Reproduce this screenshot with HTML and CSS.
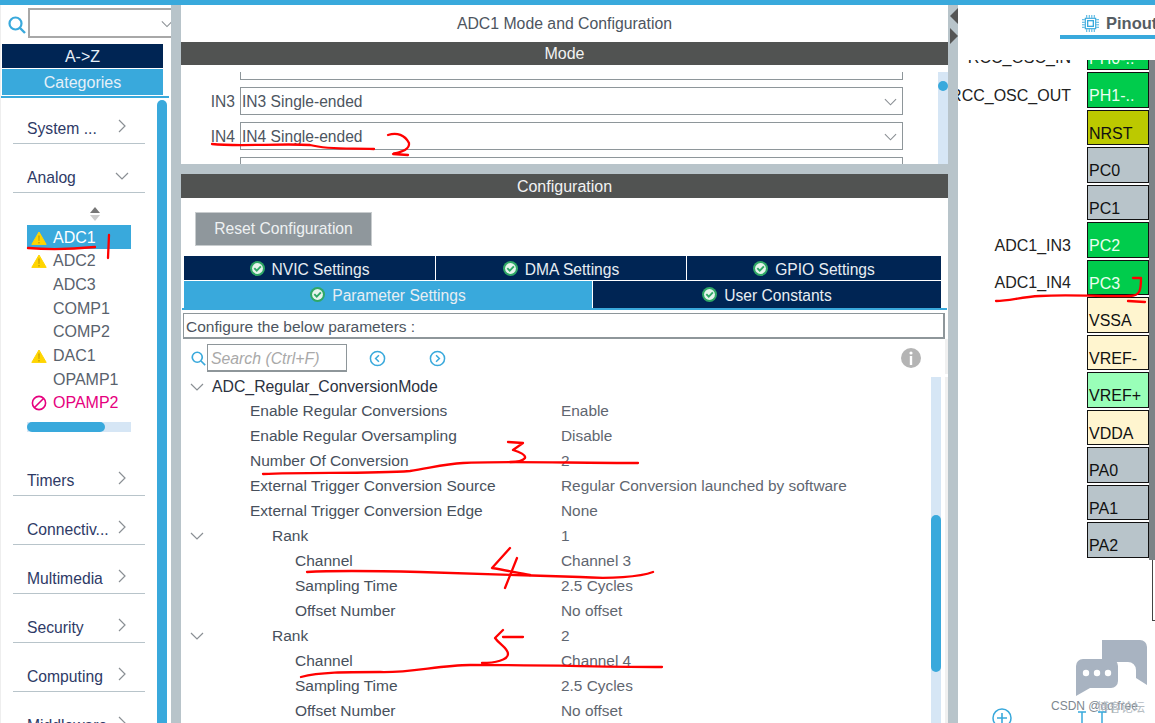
FILE: index.html
```html
<!DOCTYPE html>
<html lang="en">
<head>
<meta charset="utf-8">
<title>ADC1 Mode and Configuration</title>
<link rel="stylesheet" href="styles.css">
</head>
<body>
<svg width="0" height="0" class="defs">
  <symbol id="warn" viewBox="0 0 16 14"><path d="M8 1 15.2 13.4H0.8Z" fill="#ffd500" stroke="#ffd500" stroke-linejoin="round"/><path d="M7.4 4.5h1.2l-.2 5.5h-.8ZM7.4 11h1.2v1.4H7.4Z" fill="#b8960a"/></symbol>
  <symbol id="ok" viewBox="0 0 16 16"><circle cx="8" cy="8" r="8" fill="#2fa866"/><circle cx="8" cy="8" r="5.8" fill="#e6f4ec"/><path d="M4.6 7.6 7.2 10.4 11.6 5.8" fill="none" stroke="#2fa866" stroke-width="2"/></symbol>
  <symbol id="right" viewBox="0 0 8 14"><path d="M1 1l6 6-6 6" fill="none" stroke="#8a8f94" stroke-width="1.2"/></symbol>
  <symbol id="down" viewBox="0 0 14 8"><path d="M1 1l6 6 6-6" fill="none" stroke="#8a8f94" stroke-width="1.2"/></symbol>
</svg>
<div class="topbar"></div>
<div class="main">
  <aside class="left">
    <div class="search-row">
      <svg class="lens" viewBox="0 0 18 18"><circle cx="7.5" cy="7.5" r="6" fill="none" stroke="#39a9dc" stroke-width="2.2"/><path d="M12 12l5 5" stroke="#39a9dc" stroke-width="2.4"/></svg>
      <div class="combo"><svg class="combo-chev"><use href="#down"/></svg></div>
    </div>
    <div class="sort sort-az">A-&gt;Z</div>
    <div class="sort sort-cat">Categories</div>
    <div class="left-rule"></div>
    <div class="nav">
      <div class="nav-col">
        <div class="cat cat-first"><span>System ...</span><svg class="chev-r"><use href="#right"/></svg></div>
        <div class="cat"><span>Analog</span><svg class="chev-d"><use href="#down"/></svg></div>
        <div class="periph">
          <svg class="sorter" viewBox="0 0 12 14"><path d="M6 0l5 6H1Z" fill="#777"/><path d="M6 14l5-6H1Z" fill="#ccc"/></svg>
          <div class="item item-on"><svg class="ico"><use href="#warn"/></svg>ADC1</div>
          <div class="item"><svg class="ico"><use href="#warn"/></svg>ADC2</div>
          <div class="item"><span class="ico"></span>ADC3</div>
          <div class="item"><span class="ico"></span>COMP1</div>
          <div class="item"><span class="ico"></span>COMP2</div>
          <div class="item"><svg class="ico"><use href="#warn"/></svg>DAC1</div>
          <div class="item"><span class="ico"></span>OPAMP1</div>
          <div class="item item-no"><svg class="ico" viewBox="0 0 16 16"><circle cx="8" cy="8" r="6.6" fill="none" stroke="#e6007e" stroke-width="1.6"/><path d="M3.5 12.5l9-9" stroke="#e6007e" stroke-width="1.6"/></svg>OPAMP2</div>
          <div class="hbar"><div class="hthumb"></div></div>
        </div>
        <div class="cat"><span>Timers</span><svg class="chev-r"><use href="#right"/></svg></div>
        <div class="cat"><span>Connectiv...</span><svg class="chev-r"><use href="#right"/></svg></div>
        <div class="cat"><span>Multimedia</span><svg class="chev-r"><use href="#right"/></svg></div>
        <div class="cat"><span>Security</span><svg class="chev-r"><use href="#right"/></svg></div>
        <div class="cat"><span>Computing</span><svg class="chev-r"><use href="#right"/></svg></div>
        <div class="cat"><span>Middleware</span><svg class="chev-r"><use href="#right"/></svg></div>
      </div>
      <div class="nav-thumb"></div>
    </div>
  </aside>

  <div class="gutter"></div>

  <section class="center">
    <div class="title">ADC1 Mode and Configuration</div>
    <div class="bar bar-mode">Mode</div>
    <div class="mode-body">
      <div class="mode-list">
        <div class="mode-row mode-cut"><span class="mode-label"></span><div class="select"></div></div>
        <div class="mode-row"><span class="mode-label">IN3</span><div class="select">IN3 Single-ended<svg class="sel-chev"><use href="#down"/></svg></div></div>
        <div class="mode-row"><span class="mode-label">IN4</span><div class="select">IN4 Single-ended<svg class="sel-chev"><use href="#down"/></svg></div></div>
        <div class="mode-row"><span class="mode-label"></span><div class="select"></div></div>
      </div>
      <div class="mode-scroll"><div class="mode-dot"></div></div>
    </div>
    <div class="hgutter"></div>
    <div class="bar bar-config">Configuration</div>
    <button class="reset">Reset Configuration</button>
    <div class="tabs">
      <div class="tab-row tab-row-top">
        <div class="tab"><svg class="ok"><use href="#ok"/></svg>NVIC Settings</div>
        <div class="tab"><svg class="ok"><use href="#ok"/></svg>DMA Settings</div>
        <div class="tab"><svg class="ok"><use href="#ok"/></svg>GPIO Settings</div>
      </div>
      <div class="tab-row tab-row-bottom">
        <div class="tab tab-on"><svg class="ok"><use href="#ok"/></svg>Parameter Settings</div>
        <div class="tab tab-user"><svg class="ok"><use href="#ok"/></svg>User Constants</div>
      </div>
    </div>
    <div class="tab-rule"></div>
    <div class="hint">Configure the below parameters :</div>
    <div class="tools">
      <svg class="tool-lens" viewBox="0 0 18 18"><circle cx="7.5" cy="7.5" r="6" fill="none" stroke="#39a9dc" stroke-width="2"/><path d="M12 12l5 5" stroke="#39a9dc" stroke-width="2"/></svg>
      <div class="search-input">Search (Ctrl+F)</div>
      <svg class="nav-btn nav-prev" viewBox="0 0 18 18"><circle cx="9" cy="9" r="7.5" fill="none" stroke="#39a9dc" stroke-width="1.6"/><path d="M10.5 5.5 7 9l3.5 3.5" fill="none" stroke="#39a9dc" stroke-width="1.6"/></svg>
      <svg class="nav-btn nav-next" viewBox="0 0 18 18"><circle cx="9" cy="9" r="7.5" fill="none" stroke="#39a9dc" stroke-width="1.6"/><path d="M7.5 5.5 11 9l-3.5 3.5" fill="none" stroke="#39a9dc" stroke-width="1.6"/></svg>
      <svg class="info" viewBox="0 0 20 20"><circle cx="10" cy="10" r="10" fill="#b4b4b4"/><circle cx="10" cy="5" r="1.6" fill="#fff"/><path d="M8.8 8h2.4v9H8.8Z" fill="#fff"/></svg>
    </div>
    <div class="tree-wrap">
      <div class="tree">
        <div class="row row-head"><svg class="tw"><use href="#down"/></svg><span class="name">ADC_Regular_ConversionMode</span><span></span></div>
        <div class="row"><span></span><span class="name l1">Enable Regular Conversions</span><span class="val">Enable</span></div>
        <div class="row"><span></span><span class="name l1">Enable Regular Oversampling</span><span class="val">Disable</span></div>
        <div class="row"><span></span><span class="name l1">Number Of Conversion</span><span class="val">2</span></div>
        <div class="row"><span></span><span class="name l1">External Trigger Conversion Source</span><span class="val">Regular Conversion launched by software</span></div>
        <div class="row"><span></span><span class="name l1">External Trigger Conversion Edge</span><span class="val">None</span></div>
        <div class="row"><svg class="tw"><use href="#down"/></svg><span class="name l2">Rank</span><span class="val">1</span></div>
        <div class="row"><span></span><span class="name l3">Channel</span><span class="val">Channel 3</span></div>
        <div class="row"><span></span><span class="name l3">Sampling Time</span><span class="val">2.5 Cycles</span></div>
        <div class="row"><span></span><span class="name l3">Offset Number</span><span class="val">No offset</span></div>
        <div class="row"><svg class="tw"><use href="#down"/></svg><span class="name l2">Rank</span><span class="val">2</span></div>
        <div class="row"><span></span><span class="name l3">Channel</span><span class="val">Channel 4</span></div>
        <div class="row"><span></span><span class="name l3">Sampling Time</span><span class="val">2.5 Cycles</span></div>
        <div class="row"><span></span><span class="name l3">Offset Number</span><span class="val">No offset</span></div>
      </div>
      <div class="tree-scroll"><div class="tree-thumb"></div></div>
    </div>
  </section>

  <div class="gutter gutter-arrows">
    <svg class="arrow" viewBox="0 0 8 16"><path d="M8 0v16L0 8Z" fill="#555"/></svg>
    <svg class="arrow" viewBox="0 0 8 16"><path d="M0 0v16l8-8Z" fill="#555"/></svg>
  </div>

  <section class="right">
    <div class="right-head">
      <div class="pin-tab">
        <svg class="chip-ico" viewBox="0 0 18 18"><g fill="none" stroke="#39a9dc"><rect x="3.5" y="3.5" width="11" height="11" stroke-width="1.2"/><rect x="6" y="6" width="6" height="6" stroke-width="1.4"/><path d="M0 5h3M0 7.7h3M0 10.4h3M0 13h3M15 5h3M15 7.7h3M15 10.4h3M15 13h3M5 0v3M7.7 0v3M10.4 0v3M13 0v3M5 15v3M7.7 15v3M10.4 15v3M13 15v3"/></g></svg>
        <span>Pinout</span>
      </div>
    </div>
    <div class="board">
      <div class="pins">
        <div class="pin-row pin-first"><span class="sig">RCC_OSC_IN</span><div class="pin green">PH0-..</div></div>
        <div class="pin-row"><span class="sig sig-long">RCC_OSC_OUT</span><div class="pin green">PH1-..</div></div>
        <div class="pin-row"><span class="sig"></span><div class="pin olive">NRST</div></div>
        <div class="pin-row"><span class="sig"></span><div class="pin grey">PC0</div></div>
        <div class="pin-row"><span class="sig"></span><div class="pin grey">PC1</div></div>
        <div class="pin-row"><span class="sig">ADC1_IN3</span><div class="pin green">PC2</div></div>
        <div class="pin-row"><span class="sig">ADC1_IN4</span><div class="pin green">PC3</div></div>
        <div class="pin-row"><span class="sig"></span><div class="pin cream">VSSA</div></div>
        <div class="pin-row"><span class="sig"></span><div class="pin cream">VREF-</div></div>
        <div class="pin-row"><span class="sig"></span><div class="pin mint">VREF+</div></div>
        <div class="pin-row"><span class="sig"></span><div class="pin cream">VDDA</div></div>
        <div class="pin-row"><span class="sig"></span><div class="pin grey">PA0</div></div>
        <div class="pin-row"><span class="sig"></span><div class="pin grey">PA1</div></div>
        <div class="pin-row"><span class="sig"></span><div class="pin grey">PA2</div></div>
      </div>
      <div class="chip-side"><div class="chip-edge"></div><div class="chip-foot"></div></div>
    </div>
  </section>
</div>

<svg class="wm-icon" viewBox="0 0 72 56"><path d="M26 0h38a7 7 0 0 1 7 7v38L60 38V30a8 8 0 0 0-8-8H26Z" fill="#a8b3c1"/><path d="M7 19h28a7 7 0 0 1 7 7v15a7 7 0 0 1-7 7H14L0 56V26a7 7 0 0 1 7-7Z" fill="#a8b3c1"/><circle cx="10" cy="33" r="3.2" fill="#fff"/><circle cx="21" cy="33" r="3.2" fill="#fff"/><circle cx="32" cy="33" r="3.2" fill="#fff"/></svg>
<div class="wm-text">CSDN @qq free</div>
<div class="wm-text wm-under">博客论坛</div>
<svg class="zoom-plus" viewBox="0 0 20 20"><circle cx="10" cy="10" r="9" fill="none" stroke="#39a9dc" stroke-width="1.5"/><path d="M10 5v10M5 10h10" stroke="#39a9dc" stroke-width="1.6"/></svg>
<svg class="fit-ico" viewBox="0 0 28 16"><path d="M4 4v12M0 4h8M24 4v12M20 4h8" stroke="#39a9dc" stroke-width="1.5" fill="none"/></svg>

<svg class="ink" viewBox="0 0 1155 723" fill="none" stroke="#f00" stroke-width="2.3" stroke-linecap="round" stroke-linejoin="round">
  <path d="M28 248C50 250 75 249 95 247"/>
  <path d="M109 235 108 258"/>
  <path d="M212 144C240 147 280 143 310 145 330 150 350 148 374 149"/>
  <path d="M388 135C397 132 405 135 409 143 410 150 400 152 393 154L408 155"/>
  <path d="M263 474C310 472 370 474 410 471 430 468 445 464 463 463 500 461 570 463 638 463"/>
  <path d="M508 442 523 443 513 450C520 452 526 455 525 458 522 462 515 462 510 462"/>
  <path d="M307 572C340 570 380 571 420 572 480 574 540 576 580 577 610 579 640 577 653 572"/>
  <path d="M510 548 492 568C505 570 518 573 530 575M517 558 505 588"/>
  <path d="M301 677C320 672 345 672 380 672 410 673 440 665 470 665 540 665 610 667 662 667"/>
  <path d="M523 637H503M503 630 495 638C500 645 508 648 508 654 508 660 495 663 482 663"/>
  <path d="M996 301C1010 301 1020 297 1040 296 1070 294 1110 297 1130 296 1140 296 1141 290 1141 278H1133"/>
  <path d="M1128 301 1145 302"/>
</svg>
</body>
</html>
```
FILE: styles.css
```css
* { box-sizing: border-box; }
html, body { margin: 0; height: 100%; }
body {
  width: 1155px;
  height: 723px;
  overflow: hidden;
  position: relative;
  background: #fff;
  font-family: "Liberation Sans", Arial, sans-serif;
  font-size: 16px;
  color: #4d5560;
}
.defs { position: absolute; }
.topbar { height: 5px; background: #39a9dc; }
.main { display: flex; height: 718px; }
.gutter { width: 10px; flex: none; background: #b8c4ca; }
.gutter-arrows { display: flex; flex-direction: column; align-items: flex-end; padding-top: 3px; gap: 4px; }
.arrow { width: 8px; height: 16px; }

/* left */
.left { width: 171px; flex: none; display: flex; flex-direction: column; overflow: hidden; border-left: 1px solid #eee; margin: 0; }
.search-row { height: 39px; display: flex; padding-top: 3px; flex: none; }
.lens { width: 18px; height: 18px; margin: 8px 0 0 7px; flex: none; }
.combo { margin-left: 2px; width: 170px; height: 30px; border: 2px solid #a8a8a8; flex: none; position: relative; }
.combo-chev { width: 12px; height: 8px; position: absolute; left: 131px; top: 10px; }
.sort { margin-left: 1px; width: 161px; text-align: center; color: #e6f0f8; flex: none; }
.sort-az { height: 24px; line-height: 25px; background: #002554; }
.sort-cat { height: 26px; line-height: 27px; margin-top: 1px; background: #39a9dc; }
.left-rule { height: 2px; margin-top: 1px; width: 168px; background: #39a9dc; flex: none; }
.nav { flex: 1; display: flex; min-height: 0; padding-top: 2px; }
.nav-col { width: 156px; flex: none; }
.nav-thumb { width: 10px; flex: none; background: #39a9dc; border-radius: 5px 5px 0 0; }
.cat { height: 49px; width: 132px; margin-left: 12px; border-bottom: 1px solid #b8c4ca; padding: 0 0 5px 14px; display: flex; align-items: flex-end; position: relative; color: #2e3a66; font-size: 15.7px; }
.cat-first { height: 44px; }
.chev-r { width: 8px; height: 14px; position: absolute; left: 105px; bottom: 10px; }
.chev-d { width: 14px; height: 8px; position: absolute; left: 102px; bottom: 12px; }
.periph { height: 254px; margin-left: 26px; width: 104px; padding-top: 14px; position: relative; }
.sorter { display: block; width: 12px; height: 14px; margin: 0 0 4px 62px; }
.item { height: 23.7px; display: flex; align-items: center; gap: 6px; color: #59626d; padding: 1px 0 0 4px; white-space: nowrap; }
.item-on { background: #39a9dc; color: #fff; height: 24px; }
.item-no { color: #e6007e; }
.ico { width: 16px; height: 14px; flex: none; display: block; }
.item-no .ico { height: 16px; }
.hbar { margin-top: 7px; height: 10px; background: #d6e6f5; }
.hthumb { width: 78px; height: 10px; background: #39a9dc; border-radius: 5px; }

/* center */
.center { width: 767px; flex: none; display: flex; flex-direction: column; overflow: hidden; }
.title { height: 37px; line-height: 37px; text-align: center; flex: none; font-size: 15.8px; }
.bar { background: #515352; color: #f2f2f2; text-align: center; flex: none; }
.bar-mode { height: 23px; line-height: 23px; }
.bar-config { height: 24px; line-height: 26px; }
.hgutter { height: 10px; background: #b8c4ca; flex: none; }
.mode-body { height: 99px; padding-top: 7px; display: flex; flex: none; }
.mode-list { width: 757px; flex: none; overflow: hidden; display: flex; flex-direction: column; gap: 7px; font-size: 15.6px; }
.mode-row { display: flex; align-items: center; flex: none; }
.mode-cut { margin-top: -20px; }
.mode-label { width: 54px; text-align: right; margin-right: 5px; padding-top: 2px; flex: none; }
.select { width: 663px; height: 28px; border: 1px solid #8e969a; line-height: 28px; padding-left: 1px; position: relative; flex: none; }
.sel-chev { width: 13px; height: 8px; position: absolute; right: 5px; top: 10px; }
.mode-scroll { width: 10px; background: #d6e6f5; flex: none; }
.mode-dot { width: 10px; height: 10px; margin-top: 9px; background: #39a9dc; border-radius: 50%; }
.reset { display: block; flex: none; margin: 14px 0 0 14px; width: 177px; height: 34px; border: 1px solid #c8ccce; background: #8f979c; color: #eef1f2; font: inherit; font-size: 15.7px; padding: 0; }
.tabs { margin: 10px 0 0 3px; width: 757px; flex: none; }
.tab-row { display: grid; gap: 1px; background: #fff; }
.tab-row-top { height: 24px; grid-template-columns: 251px 250px 1fr; }
.tab-row-bottom { height: 27px; margin-top: 1px; grid-template-columns: 408px 1fr; }
.tab { background: #002554; color: #e8eef3; display: flex; align-items: center; justify-content: center; gap: 7px; font-size: 15.6px; }
.tab-row-top .tab { padding-top: 4px; }
.tab-row-bottom .tab { padding-top: 2px; }
.tab-on { background: #39a9dc; }
.ok { width: 15px; height: 15px; flex: none; margin-top: -3px; }
.tab-rule { height: 2px; margin-left: 1px; width: 765px; background: #39a9dc; flex: none; }
.hint { margin: 3px 0 0 2px; width: 762px; height: 26px; border: 1px solid #8e969a; border-width: 1px 2px 2px 1px; line-height: 25px; padding-left: 2px; flex: none; font-size: 15.5px; }
.tools { height: 35px; display: flex; align-items: center; padding: 3px 0 0 10px; flex: none; border-right: 3px solid #f0f0f0; }
.tool-lens { width: 15px; height: 15px; flex: none; }
.search-input { width: 140px; height: 28px; margin-left: 1px; border: 1px solid #8e969a; border-width: 1px 1px 2px 1px; line-height: 27px; padding-left: 3px; font-style: italic; color: #a9a9a9; flex: none; font-size: 15.8px; }
.nav-btn { width: 17px; height: 17px; flex: none; }
.nav-prev { margin-left: 22px; }
.nav-next { margin-left: 43px; }
.info { width: 20px; height: 20px; margin-left: 455px; flex: none; }
.tree-wrap { flex: 1; min-height: 0; display: flex; margin-top: 3px; overflow: hidden; border-right: 3px solid #f0f0f0; }
.tree { width: 750px; flex: none; margin-top: -3px; font-size: 15.5px; }
.row { display: grid; grid-template-columns: 31px 349px 1fr; height: 25px; padding-bottom: 1px; align-items: center; }
.tw { width: 14px; height: 8px; margin-left: 9px; }
.name { color: #47505c; white-space: nowrap; }
.row-head { padding-bottom: 0; }
.row-head .name { color: #2b3140; font-size: 15.8px; }
.l1 { padding-left: 38px; }
.l2 { padding-left: 60px; }
.l3 { padding-left: 83px; }
.val { color: #5f6670; white-space: nowrap; font-size: 15.4px; }
.tree-scroll { width: 10px; flex: none; background: #d6e6f5; padding-top: 138px; }
.tree-thumb { height: 157px; background: #39a9dc; border-radius: 5px; }

/* right */
.right { flex: 1; min-width: 0; display: flex; flex-direction: column; overflow: hidden; }
.right-head { height: 55px; flex: none; display: flex; justify-content: flex-end; }
.pin-tab { width: 95px; height: 34px; border-bottom: 4px solid #39a9dc; display: flex; align-items: center; padding: 7px 0 0 22px; gap: 7px; font-weight: bold; color: #555d63; white-space: nowrap; font-size: 16.5px; overflow: hidden; flex: none; }
.chip-ico { width: 17px; height: 17px; flex: none; }
.board { flex: 1; min-height: 0; display: flex; overflow: hidden; }
.pins { width: 191px; flex: none; display: flex; flex-direction: column; gap: 2px; }
.pin-row { display: flex; justify-content: flex-end; align-items: flex-end; gap: 16px; flex: none; }
.pin-first { margin-top: -25px; }
.sig { color: #222; white-space: nowrap; padding-bottom: 3px; }
.pin { width: 62px; height: 36px; border: 1px solid #111; padding: 0 0 2px 1px; display: flex; align-items: flex-end; flex: none; color: #111; }
.pin-row:nth-child(odd) .pin { height: 35px; padding-bottom: 1px; }
.green { background: #00cc4c; color: #eafff0; }
.olive { background: #bcc900; }
.grey { background: #b8c4ca; }
.cream { background: #fff5cf; }
.mint { background: #99ffb8; }
.chip-side { width: 6px; flex: none; display: flex; flex-direction: column; }
.chip-edge { height: 500px; background: #7d8387; flex: none; }
.chip-foot { height: 61px; border-left: 1px solid #444; border-bottom: 1px solid #444; margin-left: 3px; flex: none; }

/* overlays */
.wm-icon { position: absolute; left: 1076px; top: 640px; width: 72px; height: 56px; }
.wm-text { position: absolute; left: 1051px; top: 699px; font-size: 12px; color: #7d8790; white-space: nowrap; }
.wm-under { font-family: "Noto Sans CJK SC", "Liberation Sans", sans-serif; left: 1097px; top: 698px; color: #b5bcc2; }
.zoom-plus { position: absolute; left: 992px; top: 708px; width: 20px; height: 20px; }
.fit-ico { position: absolute; left: 1078px; top: 708px; width: 28px; height: 16px; }
.ink { position: absolute; left: 0; top: 0; width: 1155px; height: 723px; pointer-events: none; }
```
